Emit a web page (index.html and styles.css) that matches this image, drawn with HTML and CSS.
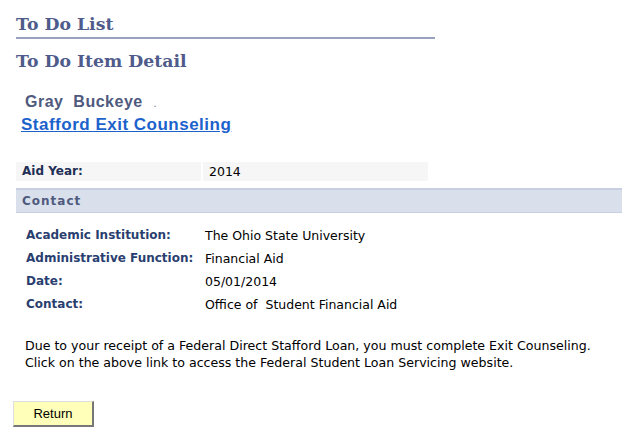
FILE: index.html
```html
<!DOCTYPE html>
<html>
  <head>
    <title>To Do Item Detail</title>
    <link rel="stylesheet" href="styles.css">
  </head>

  <body>
    <div class="page-title">To Do List</div>
    <h1 class="sub-title">To Do Item Detail</h1>

    <div class="owner">Gray&nbsp; Buckeye <span class="dot">.</span></div>
    <a class="item-link" href="#">Stafford Exit Counseling</a>

    <div class="aid-row">
      <div class="aid-label">Aid Year:</div>
      <div class="aid-value">2014</div>
    </div>

    <div class="section-bar">Contact</div>

    <div class="contact-grid">
      <div class="label">Academic Institution:</div>
      <div class="value">The Ohio State University</div>
      <div class="label">Administrative Function:</div>
      <div class="value">Financial Aid</div>
      <div class="label">Date:</div>
      <div class="value">05/01/2014</div>
      <div class="label">Contact:</div>
      <div class="value">Office of&nbsp; Student Financial Aid</div>
    </div>

    <p class="note">
      Due to your receipt of a Federal Direct Stafford Loan, you must complete Exit Counseling.<br>
      Click on the above link to access the Federal Student Loan Servicing website.
    </p>

    <button class="return-btn">Return</button>
  </body>
</html>
```

FILE: styles.css
```css
body {
  margin: 0;
  padding: 0 0 0 16px;
  background: #fff;
  font-family: "DejaVu Sans", Verdana, sans-serif;
  font-size: 12.5px;
  color: #000;
}

.page-title {
  width: 419px;
  margin-top: 14px;
  padding-bottom: 3px;
  border-bottom: 2px solid #9aa3bd;
  font-family: "DejaVu Serif", Georgia, serif;
  font-weight: bold;
  font-size: 17.3px;
  line-height: 20px;
  color: #4f5b8a;
}

.sub-title {
  margin: 12px 0 0 0;
  font-family: "DejaVu Serif", Georgia, serif;
  font-weight: bold;
  font-size: 17.3px;
  line-height: 20px;
  color: #4f5b8a;
}

.owner {
  margin: 22px 0 0 9px;
  font-family: "Liberation Sans", Arial, sans-serif;
  font-weight: bold;
  font-size: 16px;
  line-height: 18px;
  letter-spacing: 0.5px;
  color: #4f5a7e;
}

.owner .dot {
  margin-left: 6px;
  font-size: 9px;
  color: #8890aa;
}

.item-link {
  display: inline-block;
  margin: 2px 0 0 5px;
  font-family: "Liberation Sans", Arial, sans-serif;
  font-weight: bold;
  font-size: 17px;
  line-height: 20px;
  letter-spacing: 0.5px;
  color: #1c62cc;
  text-decoration: underline;
}

.aid-row {
  display: flex;
  gap: 2px;
  width: 412px;
  margin-top: 27px;
}

.aid-label,
.aid-value {
  background: #f6f6f6;
  padding: 3px 0 3px 6px;
  height: 13px;
  line-height: 13px;
}

.aid-label {
  width: 179px;
  font-weight: bold;
  font-size: 12px;
  color: #1f2f55;
}

.aid-value {
  flex: 1;
}

.section-bar {
  width: 600px;
  margin-top: 7px;
  padding: 3px 0 3px 6px;
  background: #d9e0eb;
  border-top: 2px solid #c8cfe0;
  border-bottom: 1px solid #c8cfe0;
  font-weight: bold;
  font-size: 12px;
  line-height: 16px;
  letter-spacing: 1px;
  color: #4f5a7e;
}

.contact-grid {
  display: grid;
  grid-template-columns: 179px auto;
  row-gap: 8px;
  margin: 15px 0 0 10px;
  line-height: 15px;
}

.contact-grid .label {
  font-weight: bold;
  font-size: 12px;
  color: #2a3f70;
}

.note {
  margin: 25px 0 0 9px;
  font-size: 12.6px;
  line-height: 17px;
}

.return-btn {
  display: block;
  margin: 30px 0 0 -3px;
  width: 81px;
  height: 26px;
  background: #ffffb9;
  border: 1px solid #ddd;
  border-right: 2px solid #777;
  border-bottom: 2px solid #777;
  font-family: "Liberation Sans", Arial, sans-serif;
  font-size: 13px;
  color: #000;
  cursor: pointer;
}
```
